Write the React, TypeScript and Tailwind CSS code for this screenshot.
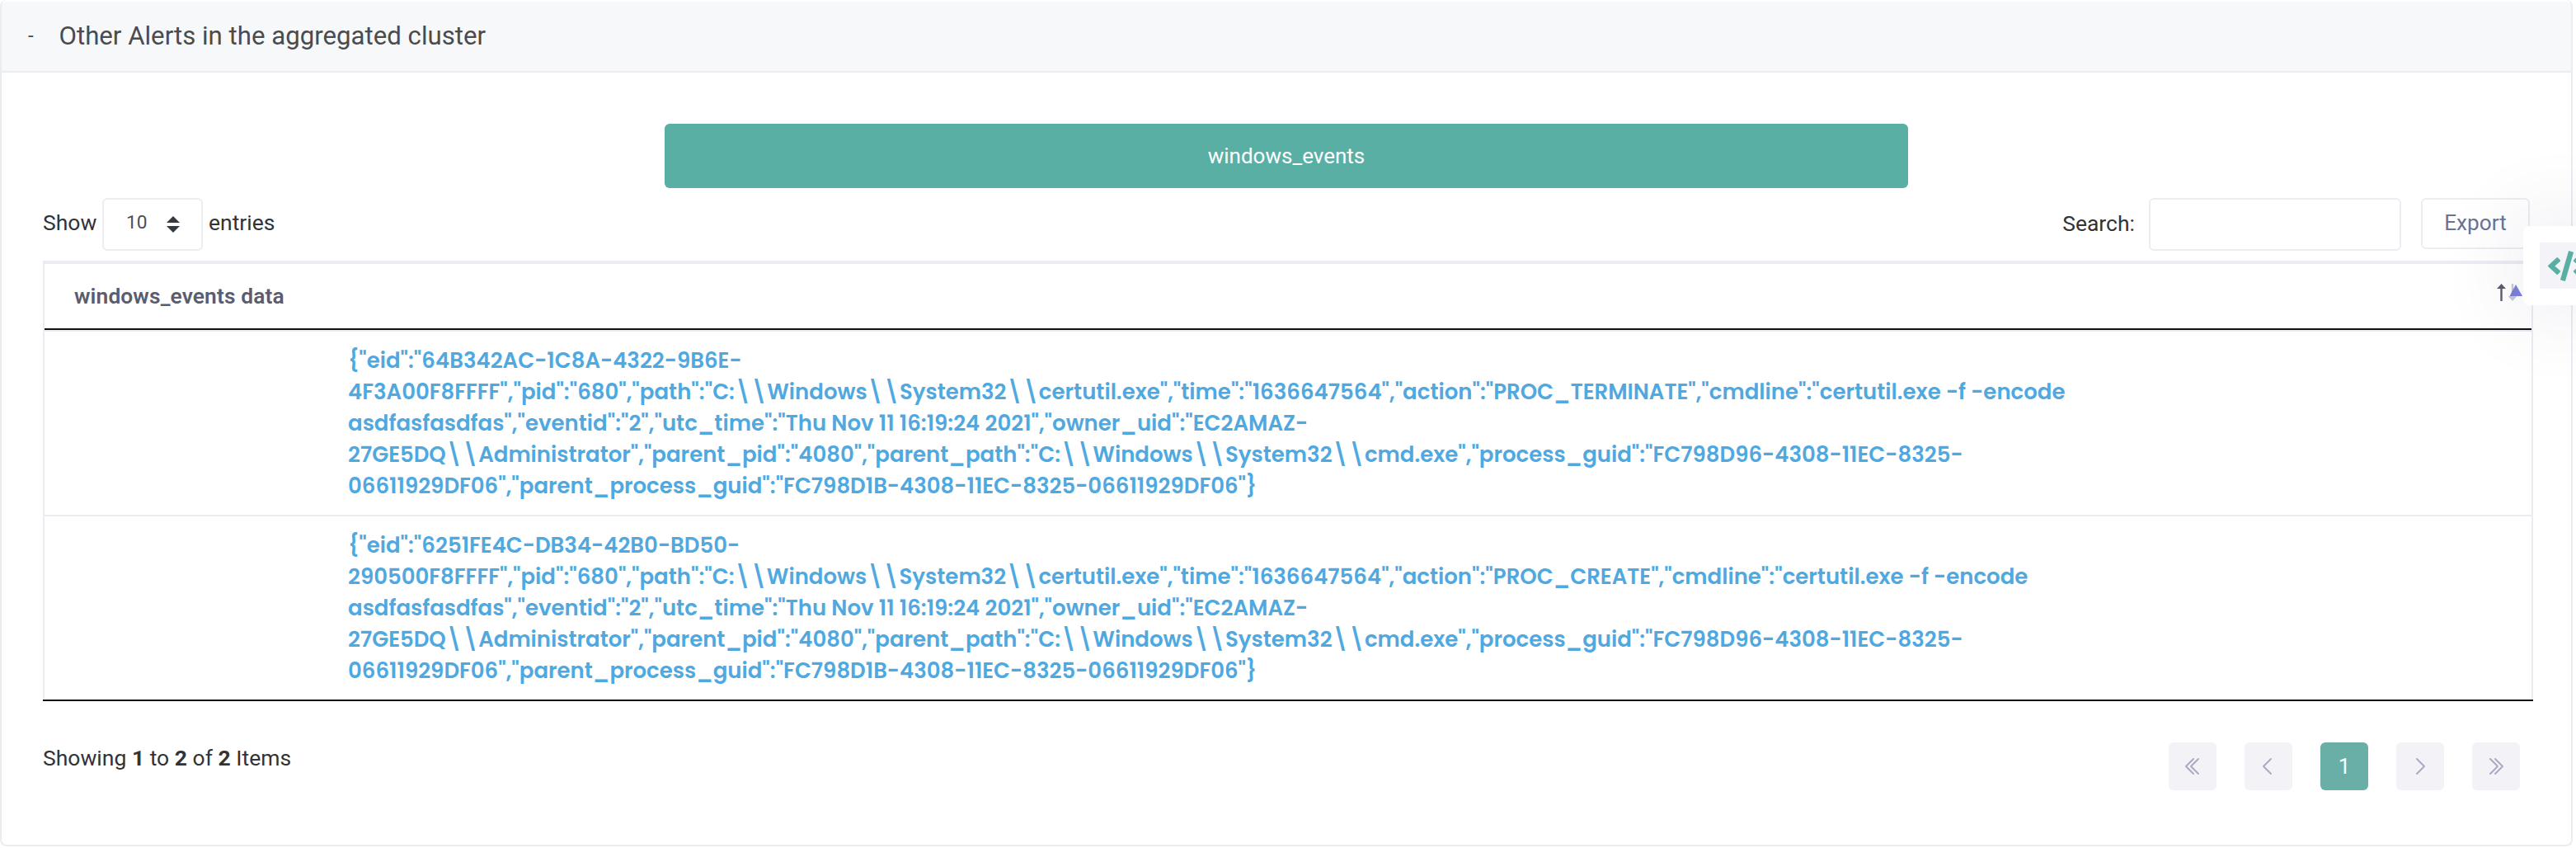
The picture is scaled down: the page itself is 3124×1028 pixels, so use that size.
import React from 'react';
import { FaCode } from 'react-icons/fa';

const events: string[][] = [
  [
    '{"eid":"64B342AC-1C8A-4322-9B6E-',
    '4F3A00F8FFFF","pid":"680","path":"C:\\\\Windows\\\\System32\\\\certutil.exe","time":"1636647564","action":"PROC_TERMINATE","cmdline":"certutil.exe -f -encode',
    'asdfasfasdfas","eventid":"2","utc_time":"Thu Nov 11 16:19:24 2021","owner_uid":"EC2AMAZ-',
    '27GE5DQ\\\\Administrator","parent_pid":"4080","parent_path":"C:\\\\Windows\\\\System32\\\\cmd.exe","process_guid":"FC798D96-4308-11EC-8325-',
    '06611929DF06","parent_process_guid":"FC798D1B-4308-11EC-8325-06611929DF06"}',
  ],
  [
    '{"eid":"6251FE4C-DB34-42B0-BD50-',
    '290500F8FFFF","pid":"680","path":"C:\\\\Windows\\\\System32\\\\certutil.exe","time":"1636647564","action":"PROC_CREATE","cmdline":"certutil.exe -f -encode',
    'asdfasfasdfas","eventid":"2","utc_time":"Thu Nov 11 16:19:24 2021","owner_uid":"EC2AMAZ-',
    '27GE5DQ\\\\Administrator","parent_pid":"4080","parent_path":"C:\\\\Windows\\\\System32\\\\cmd.exe","process_guid":"FC798D96-4308-11EC-8325-',
    '06611929DF06","parent_process_guid":"FC798D1B-4308-11EC-8325-06611929DF06"}',
  ],
];

function Chevron({ paths }: { paths: string[] }) {
  return (
    <svg width="20" height="20" viewBox="0 0 20 20" fill="none" stroke="#a8a8c2" strokeWidth="1.8" strokeLinecap="round" strokeLinejoin="round">
      {paths.map((d) => (
        <path key={d} d={d} />
      ))}
    </svg>
  );
}

const pageButton = 'flex h-[58px] w-[58px] items-center justify-center rounded-md bg-[#f2f2f7]';

function CardHeader() {
  return (
    <header className="mt-0.5 flex h-[86px] items-center rounded-t-md border-b-2 border-[#ebecf2] bg-[#f7f8fa] pl-[32px] text-[#4b4b4d]">
      <span className="w-[37.5px] pb-0.5 text-[24px] leading-[30px]">-</span>
      <h1 className="text-[31.2px] leading-9">Other Alerts in the aggregated cluster</h1>
    </header>
  );
}

function Toolbar() {
  return (
    <div className="mt-3 flex h-16 items-start justify-between pl-[50px] pr-[50px] text-[26.5px] text-[#333335]">
      <label className="flex h-16 items-center">
        <span className="w-[72px] pb-1">Show</span>
        <span className="flex h-16 w-[122px] items-center justify-between rounded-md border-2 border-[#ebedf2] pl-[27px] pr-[26px] text-[22.75px] text-[#495057]">
          <span className="pb-[3px]">10</span>
          <svg width="16" height="20" viewBox="0 0 16 20" fill="#343a40">
            <path d="M8 0 16 8H0zM0 12h16L8 20z" />
          </svg>
        </span>
        <span className="pb-1 pl-[7px]">entries</span>
      </label>
      <div className="flex items-start">
        <label className="flex h-16 items-center gap-[17px]">
          <span className="pb-[3px]">Search:</span>
          <input className="h-16 w-[306px] rounded-md border-2 border-[#ebedf2]" />
        </label>
        <button className="ml-6 h-[62px] w-[132px] rounded-md border-2 border-[#ebedf2] text-[26.2px] text-[#6c7293]">
          Export
        </button>
      </div>
    </div>
  );
}

function EventsTable() {
  return (
    <section className="ml-[50px] mr-[46px] mt-3 border-x-2 border-t-4 border-[#ebecf2]">
      <div className="flex h-20 items-center justify-between border-b-2 border-[#111] pl-9 pr-[10px]">
        <span className="pt-0.5 text-[26.4px] font-semibold tracking-[0.1px] text-[#595d6e]">windows_events data</span>
        <svg className="mb-[9px]" width="32" height="24" viewBox="0 0 32 24">
          <path d="M5.5 7V22" stroke="#595d6e" strokeWidth="2.4" />
          <path d="M0 7 5.5 1 11 7z" fill="#595d6e" />
          <path d="M19 1V16" stroke="#c9cad0" strokeWidth="2.4" />
          <path d="M13.5 16 19 22 24.500 16z" fill="#c9cad0" />
          <path d="M15.500 16 23 2 31 16z" fill="#7076d6" fillOpacity="0.92" />
        </svg>
      </div>
      {events.map((lines) => (
        <div
          key={lines[0]}
          className="border-t-2 border-[#ecebf2] py-4 pl-[368px] font-['Poppins','Inter',sans-serif] text-[26px] font-semibold leading-[38px] text-[#4fa9e0]"
        >
          {lines.map((line) => (
            <p key={line} className="whitespace-nowrap">
              {line}
            </p>
          ))}
        </div>
      ))}
    </section>
  );
}

function TableFooter() {
  return (
    <footer className="ml-[50px] mr-[46px] flex items-start justify-between border-t-2 border-[#111] pt-[50px]">
      <p className="mt-0.5 text-[26.5px] leading-[34px] text-[#333335]">
        Showing <b>1</b> to <b>2</b> of <b>2</b> Items
      </p>
      <nav className="mr-4 flex gap-[34px]">
        <button className={pageButton}>
          <Chevron paths={['M11 1 2 10l9 9', 'M17 1 8 10l9 9']} />
        </button>
        <button className={pageButton}>
          <Chevron paths={['M13 1 4 10l9 9']} />
        </button>
        <button className="flex h-[58px] w-[58px] items-center justify-center rounded-md bg-[#6aafa7] text-[26px] text-white">1</button>
        <button className={pageButton}>
          <Chevron paths={['M6 1l9 9-9 9']} />
        </button>
        <button className={pageButton}>
          <Chevron paths={['M3 1l9 9-9 9', 'M9 1l9 9-9 9']} />
        </button>
      </nav>
    </footer>
  );
}

export default function App() {
  return (
    <main className="relative h-[1028px] w-[3124px] overflow-hidden bg-white font-['Roboto',sans-serif]">
      <article className="h-[1026px] w-[3120px] rounded-lg border-x-2 border-b-2 border-[#ebecf2]">
        <div className="flex flex-col">
          <CardHeader />
          <button className="ml-[804px] mt-[62px] h-[78px] w-[1508px] rounded-md bg-[#5aafa4] text-[26px] text-white">
            windows_events
          </button>
          <Toolbar />
          <EventsTable />
          <TableFooter />
        </div>
      </article>
      <aside className="absolute left-[3060px] top-[274px] flex h-24 w-24 items-center justify-center rounded-lg bg-white shadow-[0_0_100px_0_rgba(82,63,105,0.15)]">
        <button className="flex h-14 w-14 shrink-0 items-center justify-start bg-[#f3f3f8] pl-[10px] text-[#5aafa4]">
          <FaCode className="h-[37px] w-[46px] shrink-0" />
        </button>
      </aside>
    </main>
  );
}
